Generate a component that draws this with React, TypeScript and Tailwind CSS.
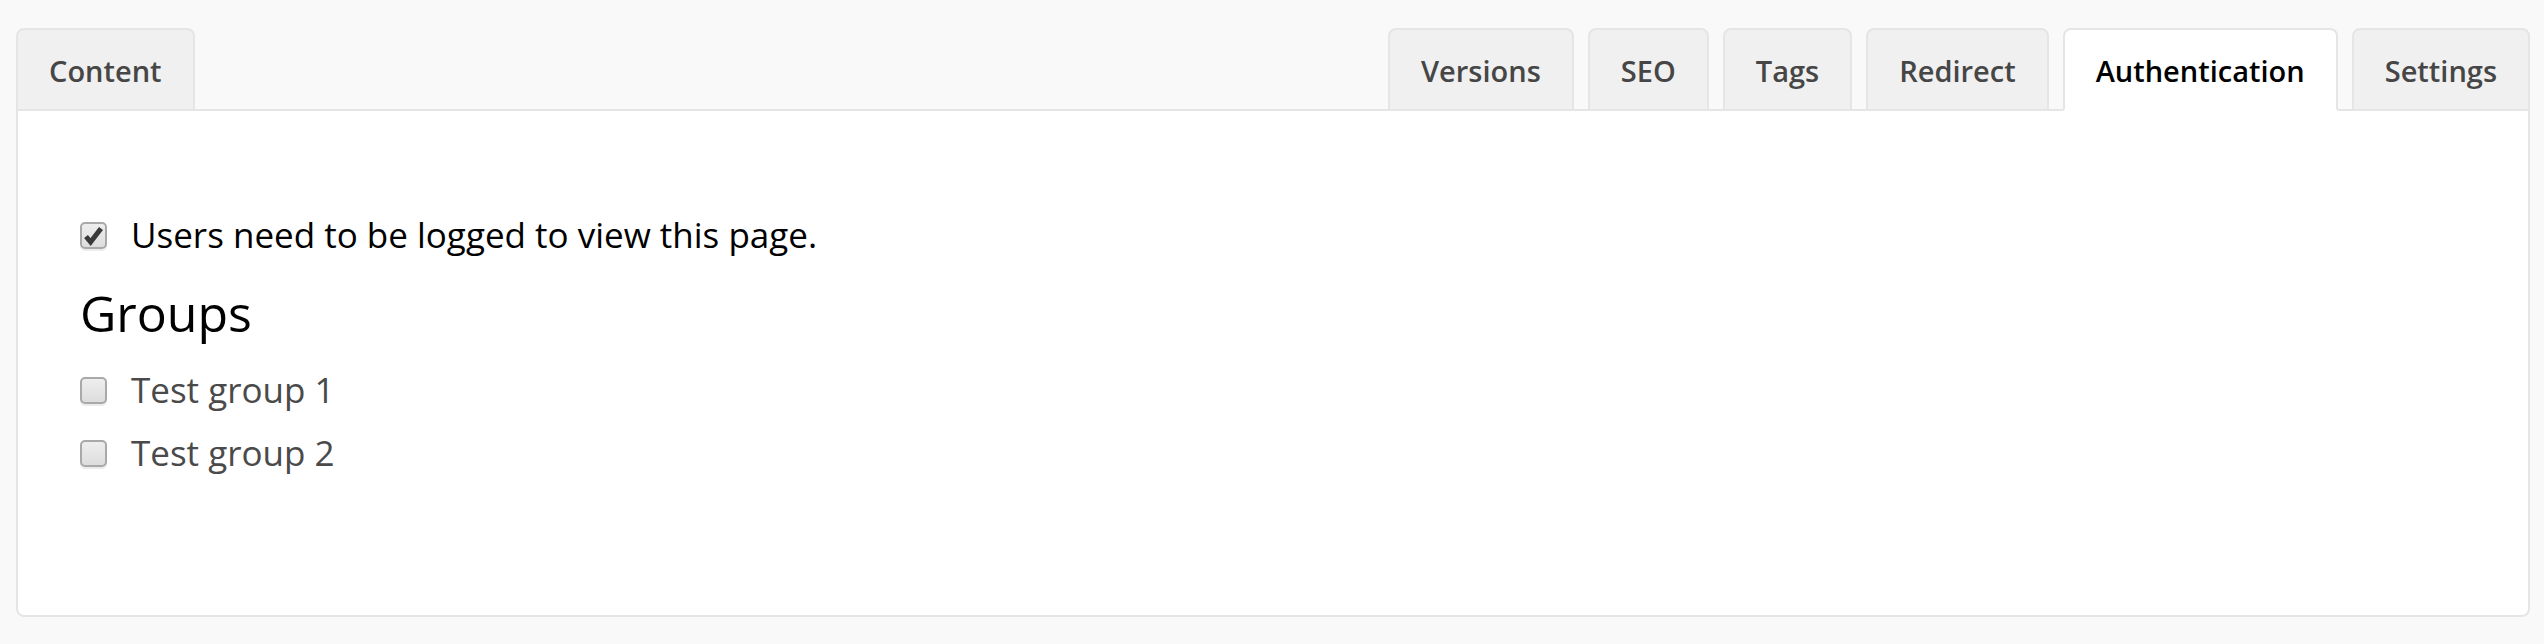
import { useState } from "react";

const tabs = ["Versions", "SEO", "Tags", "Redirect", "Authentication", "Settings"];

const groups = [
  { id: 1, name: "Test group 1" },
  { id: 2, name: "Test group 2" },
];

function Tab({ label, active }: { label: string; active?: boolean }) {
  return (
    <div
      className={
        active
          ? "h-[83px] px-[31px] pt-[2px] flex items-center rounded-t-[8px] border-2 border-[#e5e5e5] border-b-white bg-white text-black text-[29px] font-semibold"
          : "h-[83px] px-[31px] pt-[2px] flex items-center rounded-t-[8px] border-2 border-[#e5e5e5] bg-[#f0f0f0] text-[#464646] text-[29px] font-semibold"
      }
    >
      {label}
    </div>
  );
}

function Checkbox({ checked, onClick }: { checked: boolean; onClick: () => void }) {
  return (
    <button
      onClick={onClick}
      className="w-[27px] h-[27px] shrink-0 rounded-[5px] border-2 border-[#a9a9a9] bg-gradient-to-b from-[#eeeeee] to-[#dddddd] shadow-[0_2px_0_#ececec] flex items-center justify-center"
    >
      {checked && (
        <svg viewBox="0 0 23 23" className="w-[23px] h-[23px]">
          <path
            d="M4 12.5 L8.6 18 L19 4.5"
            fill="none"
            stroke="#3a3a3a"
            strokeWidth="5"
            strokeLinecap="butt"
            strokeLinejoin="miter"
          />
        </svg>
      )}
    </button>
  );
}

export default function App() {
  const [needLogin, setNeedLogin] = useState(true);
  const [selected, setSelected] = useState<number[]>([]);

  const toggle = (id: number) =>
    setSelected((s) => (s.includes(id) ? s.filter((x) => x !== id) : [...s, id]));

  return (
    <div
      className="min-h-[644px] bg-[#f9f9f9] pt-[28px] pl-[16px] pr-[14px] pb-[27px]"
      style={{ fontFamily: '"Open Sans", "Liberation Sans", sans-serif' }}
    >
      {/* Tab bar */}
      <div className="relative z-10 -mb-[2px] flex justify-between">
        <Tab label="Content" />
        <div className="flex gap-[14px]">
          {tabs.map((t) => (
            <Tab key={t} label={t} active={t === "Authentication"} />
          ))}
        </div>
      </div>

      {/* Panel */}
      <div className="h-[508px] bg-white border-2 border-[#e5e5e5] rounded-b-[8px] pl-[62px] pt-[100px]">
        <div className="h-[49px] flex items-center gap-[24px] text-[35px] text-black">
          <Checkbox checked={needLogin} onClick={() => setNeedLogin(!needLogin)} />
          <span>Users need to be logged to view this page.</span>
        </div>

        <h3 className="mt-[19px] h-[68px] text-[50px] leading-[68px] text-black">Groups</h3>

        <div className="mt-[19px] flex flex-col gap-[14px]">
          {groups.map((g) => (
            <div key={g.id} className="h-[49px] flex items-center gap-[24px] text-[35px] text-[#4a4a4a]">
              <Checkbox checked={selected.includes(g.id)} onClick={() => toggle(g.id)} />
              <span>{g.name}</span>
            </div>
          ))}
        </div>
      </div>
    </div>
  );
}
